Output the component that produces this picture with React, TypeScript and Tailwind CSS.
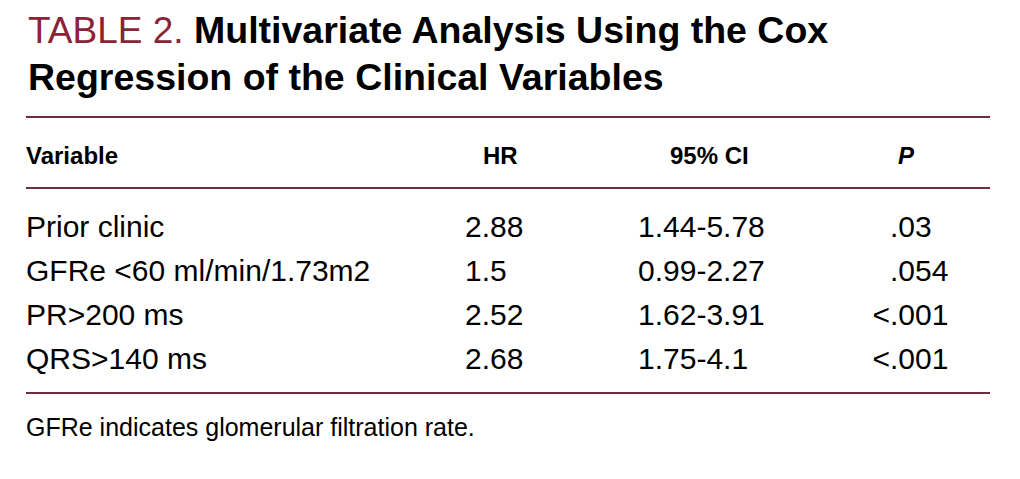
import React from "react";

const rows = [
  { v: "Prior clinic", hr: "2.88", ci: "1.44-5.78", pre: "", p: ".03" },
  { v: "GFRe <60 ml/min/1.73m2", hr: "1.5", ci: "0.99-2.27", pre: "", p: ".054" },
  { v: "PR>200 ms", hr: "2.52", ci: "1.62-3.91", pre: "<", p: ".001" },
  { v: "QRS>140 ms", hr: "2.68", ci: "1.75-4.1", pre: "<", p: ".001" },
];

export default function App() {
  return (
    <div
      className="w-[1020px] h-[479px] bg-white text-black overflow-hidden"
      style={{ fontFamily: '"Liberation Sans", Arial, sans-serif' }}
    >
      <div className="w-[964px] ml-[26px] pt-[7px]">
        <h1 className="text-[37.5px] leading-[46px] font-bold pl-[2px]">
          <span className="font-normal text-[#8a2335] text-[37px]">TABLE 2.</span>{" "}
          Multivariate Analysis Using the Cox
          <br />
          Regression of the Clinical Variables
        </h1>

        <div className="mt-[16px] h-[2px] bg-[#6f2e3d]" />

        <div className="grid grid-cols-[439px_173px_232px_1fr] text-[24px] leading-[24px] font-bold pt-[26px] pb-[19px]">
          <div>Variable</div>
          <div className="pl-[18px]">HR</div>
          <div className="pl-[32px]">95% CI</div>
          <div className="pl-[28px] italic">P</div>
        </div>

        <div className="h-[2px] bg-[#6f2e3d]" />

        <div className="pt-[16px] pb-[11px] text-[30px] leading-[44px]">
          {rows.map((r) => (
            <div key={r.v} className="grid grid-cols-[439px_173px_232px_1fr]">
              <div>{r.v}</div>
              <div>{r.hr}</div>
              <div>{r.ci}</div>
              <div className="flex">
                <span className="w-[20px] text-right">{r.pre}</span>
                <span>{r.p}</span>
              </div>
            </div>
          ))}
        </div>

        <div className="h-[2px] bg-[#6f2e3d]" />

        <p className="mt-[18px] text-[25px] leading-[30px]">
          GFRe indicates glomerular filtration rate.
        </p>
      </div>
    </div>
  );
}
